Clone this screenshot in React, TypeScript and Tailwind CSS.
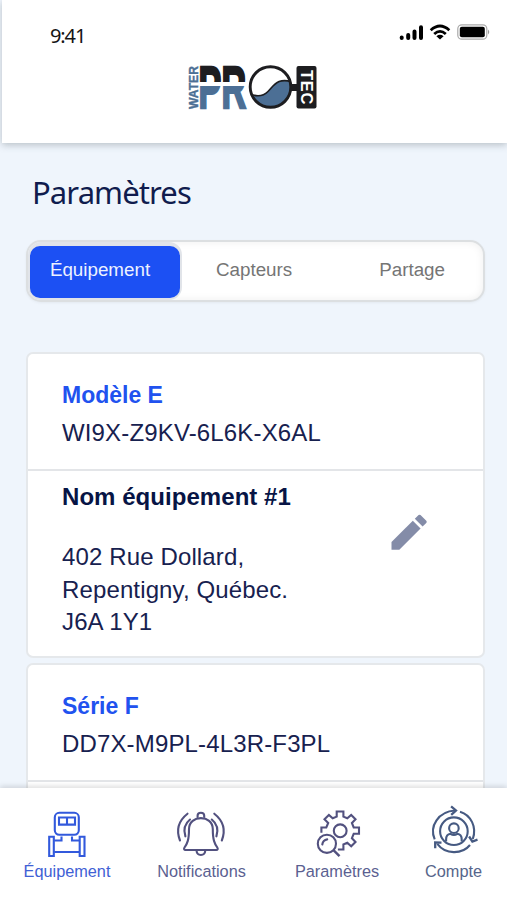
import type { ReactNode } from "react";

function Logo() {
  return (
    <svg className="h-[54px] w-[134px] overflow-visible" viewBox="186 60 134 54" aria-label="Water Protec">
      <defs>
        <linearGradient id="split" gradientUnits="userSpaceOnUse" x1="0" x2="0" y1="-42.5" y2="0">
          <stop offset=".38" stopColor="#1d1d20" />
          <stop offset=".38" stopColor="#fff" />
          <stop offset=".485" stopColor="#fff" />
          <stop offset=".485" stopColor="#4c6f95" />
        </linearGradient>
        <clipPath id="drop">
          <circle cx="270.5" cy="87" r="20.5" />
        </clipPath>
      </defs>
      <text
        transform="translate(198.3 109) rotate(-90)"
        textLength="43"
        lengthAdjust="spacingAndGlyphs"
        fontSize="13"
        fontWeight="700"
        fontFamily="Liberation Sans, sans-serif"
        fill="#4c6f95"
        stroke="#4c6f95"
        strokeWidth=".4"
      >
        WATER
      </text>
      <text
        transform="translate(198.6 108.3) scale(.57 1)"
        fontFamily="Liberation Sans, sans-serif"
        fontWeight="700"
        fontSize="60"
        fill="url(#split)"
        stroke="url(#split)"
        strokeWidth="2.6"
      >
        PR
      </text>
      <circle cx="270.5" cy="87" r="20.5" fill="#fff" />
      <path
        clipPath="url(#drop)"
        d="M248 93C256 97 263 96.5 268 91.5C274 85.5 278 76.5 294 82.5V112H248Z"
        fill="#4c6f95"
        stroke="#1d1d20"
        strokeWidth="1.7"
      />
      <circle cx="270.5" cy="87" r="20.3" fill="none" stroke="#1d1d20" strokeWidth="2.9" />
      <path d="M290 84H298V91H290Z" fill="#1d1d20" />
      <rect x="296.5" y="66" width="20" height="42.5" rx="2" fill="#1d1d20" />
      <text
        transform="translate(300.5 70) rotate(90)"
        textLength="34.5"
        lengthAdjust="spacing"
        fontSize="16.5"
        fontWeight="700"
        fontFamily="Liberation Sans, sans-serif"
        fill="#fff"
      >
        TEC
      </text>
    </svg>
  );
}

function StatusIcons() {
  return (
    <svg className="h-[20px] w-[92px]" viewBox="398 22 92 20" aria-hidden="true">
      <g stroke="#000" strokeWidth="4" strokeLinecap="round">
        <path d="M401.7 37.5V38M408.2 35V38M414.5 31.5V38M421 27.2V38" />
      </g>
      <g fill="none" stroke="#000" strokeWidth="2.8">
        <path d="M430.7 30.2Q440 21.8 449.3 30.2" />
        <path d="M434.2 34Q440 28.8 445.8 34" />
      </g>
      <path d="M436.4 36.2Q440 33.4 443.6 36.2L440 39.6Z" />
      <rect x="457.8" y="24.8" width="29" height="14.4" rx="4" fill="#fff" stroke="#aaa" strokeWidth="1.2" />
      <rect x="459.8" y="26.8" width="25" height="10.4" rx="2" fill="#000" />
      <path d="M488 29.5Q490.5 32 488 34.5Z" fill="#999" />
    </svg>
  );
}

function EquipmentIcon() {
  return (
    <svg className="h-12 w-12 overflow-visible" viewBox="43 808 48 48" fill="none" stroke="#3259dc" strokeWidth="2.1">
      <rect x="54.8" y="812.8" width="24" height="22" rx="4.5" />
      <path d="M59 817.5H75V824.6H59ZM67 817.5V824.6" />
      <path d="M61.5 836.5V840.5H54.2M72 836.5V840.5H79.3M54.2 852H79.3" />
      <path d="M49.2 836.8H53.8V856H49.2ZM79.7 836.8H84.5V856H79.7Z" />
    </svg>
  );
}

function BellIcon() {
  return (
    <svg className="h-12 w-[52px] overflow-visible" viewBox="176 808 52 48" fill="none" stroke="#52517f" strokeWidth="2.1" strokeLinecap="round" strokeLinejoin="round">
      <path d="M189 829C189 814.5 212.8 814.5 212.8 829C212.8 840 214.5 843.5 217.3 847.5C218.2 849 217.7 850 216.2 850H185.6C184.1 850 183.6 849 184.5 847.5C187.3 843.5 189 840 189 829Z" />
      <path d="M197.6 817V815.5C197.6 811.8 204.2 811.8 204.2 815.5V817" />
      <path d="M196.5 850.5C197 856.5 204.8 856.5 205.3 850.5" />
      <path d="M187.5 813.7Q173.8 824.5 180 840.5M190 819.5Q182 826 185.4 836.3" />
      <path d="M214.3 813.7Q228 824.5 221.8 840.5M211.8 819.5Q219.8 826 216.4 836.3" />
    </svg>
  );
}

function GearSearchIcon() {
  return (
    <svg className="h-12 w-12 overflow-visible" viewBox="314.3 808 48 48" fill="none" stroke="#52517f" strokeWidth="2.1">
      <path d="M322.7 832.8V827.5H327.6L329.5 823L325.8 819.2L330.2 815L334 818.3L338 816.6V811.5H344.7V816.6L348.6 818.3L352.5 815L356.8 819.2L353.2 823L355 827.5H360.3V833.8H355L353.2 838.2L356.8 842L352.5 846.2L348.6 842.8L344.7 844.5V849.5H339.2" />
      <circle cx="341.5" cy="830.8" r="6.4" />
      <circle cx="328.2" cy="843.8" r="9.1" />
      <path d="M323.6 844.5C324 841.5 325.8 839.8 328.5 839.4" strokeLinecap="round" />
      <path d="M335 850.3L340.8 856.2" strokeWidth="2.4" />
    </svg>
  );
}

function AccountIcon() {
  return (
    <svg className="h-12 w-12 overflow-visible" viewBox="429.5 808 48 48" fill="none" stroke="#465a82" strokeWidth="2.1">
      <circle cx="453.4" cy="831.2" r="13.8" />
      <circle cx="453.4" cy="828.2" r="4.8" />
      <path d="M445.6 841.5V839.5Q445.6 834.3 450 833.8Q453.4 836.3 456.8 833.8Q461.2 834.3 461.2 839.5V841.5" />
      <path d="M434.2 839.3C428.5 826 438 811.5 454.5 810.5M459.5 811.7C470.5 815 476.5 827 472.3 839M469.5 845C461.5 854.7 445 854.7 436.8 843.8" />
      <path d="M450.6 806.3L455.5 810.5L450.7 814.8M477 839.7L471.9 841.5L468.6 836.5M434.7 848.2V842.4L441 842.6" strokeWidth="2.3" />
    </svg>
  );
}

function NavItem({ icon, label, className }: { icon: ReactNode; label: string; className: string }) {
  return (
    <button className={`flex flex-none flex-col items-center gap-[5px] whitespace-nowrap pt-5 text-[16.3px] leading-5 ${className}`}>
      {icon}
      <span>{label}</span>
    </button>
  );
}

function EquipmentHead({ name, serial }: { name: string; serial: string }) {
  return (
    <div className="h-[117px] border-b-2 border-[#e3e5e8] pt-[21px] pl-[34px]">
      <h2 className="h-[38px] text-[23px] leading-10 font-bold text-[#2152ef]">{name}</h2>
      <p className="text-[24px] leading-10 tracking-[0.15px]">{serial}</p>
    </div>
  );
}

export default function App() {
  return (
    <div className="flex h-[900px] w-[507px] flex-col overflow-hidden bg-[#eff5fc] font-['Liberation_Sans',Arial,sans-serif] text-[#17214f]">
      <header className="relative z-10 ml-[2px] h-[143px] flex-none bg-white shadow-[0_2px_7px_rgba(80,90,100,.34)]">
        <div className="flex h-[58px] items-start justify-between pt-[22px] pr-[17px] pl-12">
          <span className="font-['Noto_Sans',sans-serif] text-[20px] leading-7 tracking-[-1.1px] text-[#151515]">9:41</span>
          <StatusIcons />
        </div>
        <div className="flex pt-[2px] pl-[184px]">
          <Logo />
        </div>
      </header>

      <main className="min-h-0 flex-1 overflow-hidden pr-[22px] pl-[26px]">
        <h1 className="mt-[29px] ml-[6px] font-['Noto_Sans',sans-serif] text-[31px] leading-[40px] tracking-[-0.9px] text-[#101c4e]">
          Paramètres
        </h1>

        <div className="mt-[28px] flex h-[62px] w-[459px] rounded-[15px] border-2 border-[#dcdfe1] bg-white text-[18.8px] text-[#757575] shadow-[inset_0_0_8px_rgba(0,0,0,.07),0_1px_3px_rgba(0,0,0,.05)]">
          <div className="h-[58px] w-[154px] flex-none rounded-[13px] bg-[#e1e4e9] pt-[4px] pl-[2px]">
            <button className="h-[52px] w-[150px] rounded-[10px] bg-[#1c50f3] pr-[10px] pb-[3px] text-[#edf2ff]">Équipement</button>
          </div>
          <button className="ml-[34px] pb-px">Capteurs</button>
          <button className="ml-[87px] pb-px">Partage</button>
        </div>

        <section className="mt-[50px] h-[306px] w-[459px] rounded-[7px] border-2 border-[#e5e8eb] bg-white">
          <EquipmentHead name="Modèle E" serial="WI9X-Z9KV-6L6K-X6AL" />
          <div className="flex pl-[34px] text-[24px]">
            <div className="w-[329px] pt-[10px]">
              <h3 className="leading-8 font-bold tracking-[0.05px] text-[#071445]">Nom équipement #1</h3>
              <p className="mt-[28px] leading-[32.5px] tracking-[0.13px]">
                402 Rue Dollard,
                <br />
                Repentigny, Québec.
                <br />
                J6A 1Y1
              </p>
            </div>
            <button aria-label="Modifier" className="mt-[43px] h-9 w-9">
              <svg className="h-9 w-9" viewBox="0 0 36 36" fill="#848ca8">
                <path d="M0.5 28V35.8H8.3L29.6 14.5L21.8 6.7Z" />
                <path d="M23.8 4.8L31.6 12.6L35.5 8.7Q36 7.5 35.3 6.8L29.5 1Q28.6.3 27.6 1Z" />
              </svg>
            </button>
          </div>
        </section>

        <section className="mt-[5px] h-[306px] w-[459px] rounded-[7px] border-2 border-[#e5e8eb] bg-white">
          <EquipmentHead name="Série F" serial="DD7X-M9PL-4L3R-F3PL" />
        </section>
      </main>

      <nav className="relative z-10 flex h-[112px] flex-none bg-white pl-[23px] text-[#5b5f91] shadow-[0_-2px_5px_rgba(0,0,0,.13)]">
        <NavItem icon={<EquipmentIcon />} label="Équipement" className="w-[88px] text-[#3f61d5]" />
        <NavItem icon={<BellIcon />} label="Notifications" className="ml-[46px] w-[89px]" />
        <NavItem icon={<GearSearchIcon />} label="Paramètres" className="ml-[49px] w-[84px]" />
        <NavItem icon={<AccountIcon />} label="Compte" className="ml-[46px] w-[57px] text-[#56658b]" />
      </nav>
    </div>
  );
}
